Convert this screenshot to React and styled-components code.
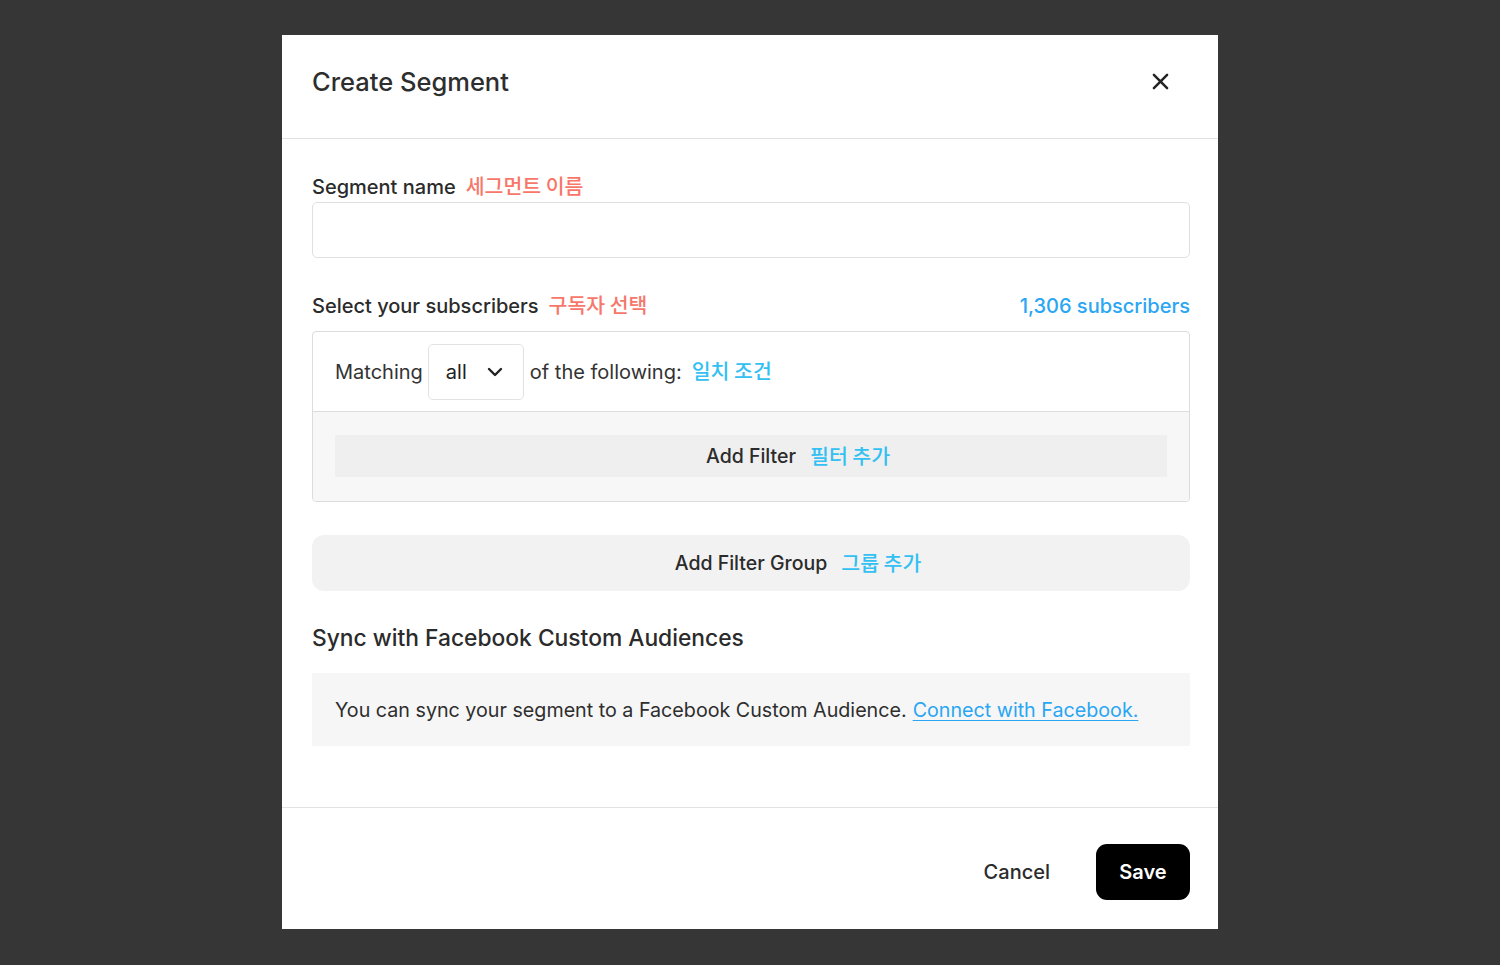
import React, { useState } from "react";
import styled, { createGlobalStyle } from "styled-components";

const GlobalStyle = createGlobalStyle`
  html, body {
    margin: 0;
    padding: 0;
    background: #363636;
  }
  body {
    font-family: Inter, "Noto Sans CJK KR", sans-serif;
    color: #2b2b2b;
  }
  * { box-sizing: border-box; }
`;

const Backdrop = styled.div`
  width: 1500px;
  height: 965px;
  display: flex;
  justify-content: center;
  padding-top: 35px;
  background: #363636;
`;

const Modal = styled.div`
  width: 936px;
  height: 894px;
  background: #fff;
  display: flex;
  flex-direction: column;
`;

const Header = styled.header`
  height: 104px;
  display: flex;
  align-items: center;
  justify-content: space-between;
  padding: 0 30px 10px 30px;
  border-bottom: 1.5px solid #e2e2e2;
`;

const Title = styled.h1`
  margin: 0;
  font-size: 25.5px;
  font-weight: 500;
  color: #2e2e2e;
`;

const CloseBtn = styled.button`
  all: unset;
  cursor: pointer;
  display: flex;
  margin-right: 19px;
  color: #222;
`;

const Body = styled.div`
  flex: 1;
  padding: 36px 28px 0 30px;
  display: flex;
  flex-direction: column;
`;

const LabelRow = styled.div`
  display: flex;
  align-items: center;
  justify-content: space-between;
  height: 24px;
  margin-top: ${(p) => p.gap || 0}px;
`;

const Label = styled.label`
  font-size: 20px;
  font-weight: 500;
  color: #2b2b2b;
  display: flex;
  align-items: center;
  gap: 10px;
`;

const Note = styled.span`
  font-family: "Noto Sans CJK KR", sans-serif;
  font-weight: 500;
  font-size: 20.5px;
  color: ${(p) => (p.tone === "red" ? "#f7776a" : "#33c0f2")};
  position: relative;
  top: -2px;
  white-space: nowrap;
`;

const Anchor = styled.span`
  position: relative;
`;

const FloatNote = styled(Note)`
  position: absolute;
  left: calc(100% + 14px);
  top: 50%;
  transform: translateY(-55%);
`;

const TextInput = styled.input`
  margin-top: 3px;
  width: 100%;
  height: 56px;
  border: 1.5px solid #e0e0e0;
  border-radius: 5px;
  font-size: 18px;
  padding: 0 15px;
  outline: none;
`;

const Count = styled.span`
  font-size: 20px;
  font-weight: 500;
  color: #2aa6f3;
`;

const FilterBox = styled.div`
  margin-top: 13px;
  border: 1.5px solid #dcdcdc;
  border-radius: 4px;
  overflow: hidden;
`;

const MatchRow = styled.div`
  height: 80px;
  display: flex;
  align-items: center;
  padding: 0 22px;
  gap: 6px;
  font-size: 20px;
  color: #333;
  border-bottom: 1.5px solid #dcdcdc;
`;

const Select = styled.div`
  width: 96px;
  height: 56px;
  border: 1.5px solid #e2e2e2;
  border-radius: 5px;
  display: flex;
  align-items: center;
  justify-content: space-between;
  padding: 0 20px 0 17px;
  font-size: 20px;
  color: #222;
  margin-left: -1px;
`;

const FilterArea = styled.div`
  background: #f7f7f7;
  padding: 23px 22px 24px;
`;

const FilterBtn = styled.button`
  all: unset;
  cursor: pointer;
  width: 100%;
  height: ${(p) => p.h || 42}px;
  background: ${(p) => p.bg || "#efefef"};
  border-radius: ${(p) => p.radius || 0}px;
  display: flex;
  align-items: center;
  justify-content: center;
  font-size: 19.5px;
  font-weight: 500;
  color: #2b2b2b;
`;

const GroupWrap = styled.div`
  margin-top: 33px;
`;

const SubTitle = styled.h2`
  margin: 33px 0 0;
  font-size: 22.8px;
  font-weight: 500;
  color: #2b2b2b;
`;

const InfoBox = styled.div`
  margin-top: 22px;
  height: 73px;
  background: #f6f6f6;
  display: flex;
  align-items: center;
  padding: 0 23px;
  font-size: 19.7px;
  color: #2e2e2e;
`;

const FbLink = styled.a`
  color: #2aa6f3;
  margin-left: 6px;
  text-decoration: underline;
  text-underline-offset: 3px;
  cursor: pointer;
`;

const Footer = styled.footer`
  height: 122px;
  border-top: 1.5px solid #e2e2e2;
  display: flex;
  align-items: center;
  justify-content: flex-end;
  padding: 7px 28px 0 0;
  gap: 46px;
`;

const CancelBtn = styled.button`
  all: unset;
  cursor: pointer;
  font-size: 20px;
  font-weight: 500;
  color: #2b2b2b;
`;

const SaveBtn = styled.button`
  all: unset;
  cursor: pointer;
  width: 94px;
  height: 56px;
  border-radius: 11px;
  background: #000;
  color: #fff;
  font-size: 20px;
  font-weight: 600;
  display: flex;
  align-items: center;
  justify-content: center;
`;

const App = () => {
  const [name, setName] = useState("");
  return (
    <Backdrop>
      <GlobalStyle />
      <Modal>
        <Header>
          <Title>Create Segment</Title>
          <CloseBtn aria-label="close">
            <svg width="17" height="17" viewBox="0 0 18 18" fill="none">
              <path d="M2 2L16 16M16 2L2 16" stroke="#222" strokeWidth="2.6" strokeLinecap="round" />
            </svg>
          </CloseBtn>
        </Header>
        <Body>
          <LabelRow>
            <Label>
              Segment name <Note tone="red">세그먼트 이름</Note>
            </Label>
          </LabelRow>
          <TextInput value={name} onChange={(e) => setName(e.target.value)} />

          <LabelRow gap={36}>
            <Label>
              Select your subscribers <Note tone="red">구독자 선택</Note>
            </Label>
            <Count>1,306 subscribers</Count>
          </LabelRow>
          <FilterBox>
            <MatchRow>
              Matching
              <Select>
                all
                <svg width="16" height="10" viewBox="0 0 16 10" fill="none">
                  <path d="M2 2L8 8L14 2" stroke="#222" strokeWidth="2.4" strokeLinecap="round" strokeLinejoin="round" />
                </svg>
              </Select>
              of the following:
              <Note tone="blue" style={{ marginLeft: 4 }}>일치 조건</Note>
            </MatchRow>
            <FilterArea>
              <FilterBtn>
                <Anchor>
                  Add Filter
                  <FloatNote tone="blue">필터 추가</FloatNote>
                </Anchor>
              </FilterBtn>
            </FilterArea>
          </FilterBox>

          <GroupWrap>
            <FilterBtn h={56} bg="#f2f2f2" radius={12}>
              <Anchor>
                Add Filter Group
                <FloatNote tone="blue">그룹 추가</FloatNote>
              </Anchor>
            </FilterBtn>
          </GroupWrap>

          <SubTitle>Sync with Facebook Custom Audiences</SubTitle>
          <InfoBox>
            You can sync your segment to a Facebook Custom Audience.
            <FbLink>Connect with Facebook.</FbLink>
          </InfoBox>
        </Body>
        <Footer>
          <CancelBtn>Cancel</CancelBtn>
          <SaveBtn>Save</SaveBtn>
        </Footer>
      </Modal>
    </Backdrop>
  );
};

export default App;
